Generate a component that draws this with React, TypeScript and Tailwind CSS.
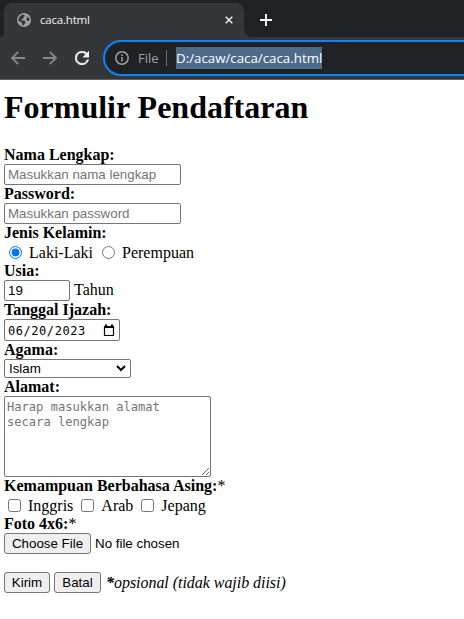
import type { ReactNode } from 'react';

const serif = "font-['Liberation_Serif','Times_New_Roman',serif]";
const sans = "font-['Liberation_Sans',Arial,sans-serif]";
const mono = "font-['DejaVu_Sans_Mono',monospace]";
const chrome = "font-['Open_Sans','Noto_Sans',sans-serif]";

function Label({ children, note }: { children: ReactNode; note?: boolean }) {
  return (
    <div className="h-[18px] text-[16px] leading-[18px]">
      <b>{children}</b>
      {note && '*'}
    </div>
  );
}

function TabStrip() {
  return (
    <div className="flex h-[37px] bg-[#35363a]">
      <div className="w-1 shrink-0 rounded-br-[4px] bg-[#202124]" />
      <div className="flex w-[240px] shrink-0 bg-[#202124]">
        <div className="mt-[3px] flex h-[34px] w-full items-center rounded-t-[8px] bg-[#35363a] pl-[13px] pr-[11px]">
          <svg width="14" height="14" viewBox="0 0 14 14">
            <circle cx="7" cy="7" r="7" fill="#9aa0a6" />
            <path
              d="M5.5 1.6 7.4 2l.3 1.2-1.3 1.2.2 1.1-1.8.5-.4 1.4 2.9.2 1.2 1.5-.4 1.3-1.2.5-.3 1.6-1.4-.5-.2-2-1.2-1.3-2.3-1V5.9L3 3.2ZM10 3.1l2.1 1.8.5 2-.9 1.2-1.5-.4-1.1-1.4.5-1.3 1-.6Z"
              fill="#35363a"
            />
          </svg>
          <span className={`${chrome} ml-[9px] grow text-[11.5px] leading-4 tracking-[-0.2px] text-[#f1f3f4]`}>caca.html</span>
          <svg width="8" height="8" viewBox="0 0 8 8" stroke="#e8eaed" strokeWidth="1.5">
            <path d="m.7.7 6.6 6.6M7.3.7.7 7.3" />
          </svg>
        </div>
      </div>
      <div className="flex grow items-start rounded-bl-[8px] bg-[#202124] pl-4 pt-[14px]">
        <svg width="12" height="12" viewBox="0 0 12 12" stroke="#fff" strokeWidth="1.8">
          <path d="M6 0v12M0 6h12" />
        </svg>
      </div>
    </div>
  );
}

function Toolbar() {
  return (
    <div className="flex h-[43px] items-start overflow-hidden border-b border-[#5c5e62] bg-[#35363a] pt-[3px]">
      <div className="flex h-9 w-[103px] shrink-0 items-center pl-[11px]">
        <svg width="14" height="14" viewBox="0 0 14 14" fill="none" stroke="#87888b" strokeWidth="1.8">
          <path d="M14 7H1.2M7.2.8 1 7l6.2 6.2" />
        </svg>
        <svg className="ml-[18px]" width="14" height="14" viewBox="0 0 14 14" fill="none" stroke="#87888b" strokeWidth="1.8">
          <path d="M0 7h12.8M6.8.8 13 7l-6.2 6.2" />
        </svg>
        <svg className="ml-[18px]" width="14" height="14" viewBox="4 4 16 16" fill="#f1f3f4" stroke="#f1f3f4" strokeWidth=".5">
          <path d="M17.65 6.35A8 8 0 1 0 19.73 14h-2.08A6 6 0 1 1 12 6c1.66 0 3.14.69 4.22 1.78L13 11h7V4l-2.35 2.35Z" />
        </svg>
      </div>
      <div className="flex h-9 w-[400px] shrink-0 items-center rounded-l-full border-2 border-r-0 border-[#0a84ff] bg-[#202124] pl-[10px]">
        <svg width="14" height="14" viewBox="0 0 14 14" fill="none" stroke="#9aa0a6" strokeWidth="1.5">
          <circle cx="7" cy="7" r="6.2" />
          <path d="M7 6.1v4.3M7 3.3v1.6" />
        </svg>
        <span className={`${chrome} ml-[9px] w-[21px] whitespace-nowrap text-[13px] leading-5 text-[#9aa0a6]`}>File</span>
        <span className="ml-[7px] h-4 w-px bg-[#6b6d70]" />
        <span className={`${chrome} ml-[9px] h-[22px] w-[146px] whitespace-nowrap bg-[#4d6a8b] text-[13.3px] leading-[22px] text-white`}>
          D:/acaw/caca/caca.html
        </span>
      </div>
    </div>
  );
}

function Check({ label }: { label: string }) {
  return (
    <label className="flex items-center">
      <input type="checkbox" className="m-0 mr-[7px] h-[13px] w-[13px]" />
      <span className="pt-[2px] leading-[18px]">{label}</span>
    </label>
  );
}

export default function App() {
  const field = 'block border border-[#767676] rounded-[2px] bg-white outline-none placeholder:text-[#757575] placeholder:opacity-100';
  const button = `${sans} h-[21px] rounded-[3px] border border-[#767676] bg-[#efefef] text-[13.33px] leading-[19px] whitespace-nowrap`;
  return (
    <div className={`${serif} h-[619px] w-[464px] overflow-hidden bg-white text-[16px] text-black`}>
      <TabStrip />
      <Toolbar />
      <form className="pl-1" onSubmit={(e) => e.preventDefault()}>
        <h1 className="h-[66px] whitespace-nowrap pt-[9px] text-[32px] font-bold leading-[36px]">Formulir Pendaftaran</h1>
        <Label>Nama Lengkap:</Label>
        <input className={`${field} ${sans} h-[21px] w-[177px] px-[3px] text-[13.33px]`} placeholder="Masukkan nama lengkap" />
        <Label>Password:</Label>
        <input type="password" className={`${field} ${sans} h-[21px] w-[177px] px-[3px] text-[13.33px]`} placeholder="Masukkan password" />
        <Label>Jenis Kelamin:</Label>
        <div className="flex h-5 items-center pl-[5px] leading-[18px]">
          <input type="radio" name="jk" defaultChecked className="m-0 h-[13px] w-[13px]" />
          <span className="ml-[7px] w-[73px] pt-[2px]">Laki-Laki</span>
          <input type="radio" name="jk" className="m-0 h-[13px] w-[13px]" />
          <span className="ml-[7px] pt-[2px]">Perempuan</span>
        </div>
        <Label>Usia:</Label>
        <div className="flex h-[21px] items-center gap-1">
          <input className={`${field} ${sans} h-[21px] w-[66px] px-[3px] text-[13.33px]`} defaultValue="19" />
          <span className="pb-px leading-[20px]">Tahun</span>
        </div>
        <Label>Tanggal Ijazah:</Label>
        <div className={`${field} ${mono} flex h-[22px] w-[116px] items-center pl-[3px] pr-1 text-[12px] tracking-[0.55px]`}>
          <span className="grow whitespace-nowrap pt-px">06/20/2023</span>
          <svg width="12" height="13" viewBox="0 0 12 13" fill="none" stroke="#000">
            <path d="M1.5 2.5h9v9h-9z" strokeWidth="1.2" />
            <path d="M1 3h10M3 .5V3M9 .5V3" strokeWidth="2" />
          </svg>
        </div>
        <Label>Agama:</Label>
        <div className={`${field} ${sans} flex h-[19px] w-[127px] items-center pl-1 pr-1 text-[13.33px] leading-4`}>
          <span className="grow">Islam</span>
          <svg width="10" height="7" viewBox="0 0 10 7" fill="none" stroke="#000" strokeWidth="2">
            <path d="m1 1 4 4 4-4" />
          </svg>
        </div>
        <Label>Alamat:</Label>
        <textarea
          className={`${field} ${mono} h-[81px] w-[207px] px-[2px] py-[3px] text-[12.1px] leading-[15px]`}
          placeholder={'Harap masukkan alamat\nsecara lengkap'}
        />
        <Label note>Kemampuan Berbahasa Asing:</Label>
        <div className="flex h-5 items-center gap-2 pl-1">
          <Check label="Inggris" />
          <Check label="Arab" />
          <Check label="Jepang" />
        </div>
        <Label note>Foto 4x6:</Label>
        <div className="flex h-[21px] items-center">
          <button type="button" className={`${button} w-[87px]`}>Choose File</button>
          <span className={`${sans} ml-1 text-[13.33px]`}>No file chosen</span>
        </div>
        <div className="mt-[18px] flex h-[21px] items-center gap-1">
          <button className={`${button} w-[46px]`}>Kirim</button>
          <button type="reset" className={`${button} w-[47px]`}>Batal</button>
          <span className="ml-px whitespace-nowrap italic tracking-[-0.04px]"><b>*</b>opsional (tidak wajib diisi)</span>
        </div>
      </form>
    </div>
  );
}
